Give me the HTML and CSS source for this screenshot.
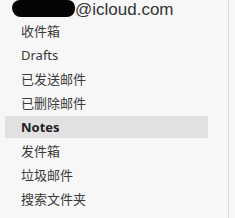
FILE: index.html
```html
<!DOCTYPE html>
<html>
<head>
<meta charset="utf-8">
<link rel="stylesheet" href="styles.css">
</head>
<body>
<div class="pane">
  <div class="account">
    <span class="redact"></span><span class="addr">@icloud.com</span>
  </div>
  <ul class="folders">
    <li class="folder">收件箱</li>
    <li class="folder">Drafts</li>
    <li class="folder">已发送邮件</li>
    <li class="folder">已删除邮件</li>
    <li class="folder selected">Notes</li>
    <li class="folder">发件箱</li>
    <li class="folder">垃圾邮件</li>
    <li class="folder">搜索文件夹</li>
  </ul>
</div>
</body>
</html>
```
FILE: styles.css
```css
html, body {
  margin: 0;
  padding: 0;
  background: #f7f7f7;
}
body {
  width: 235px;
  height: 218px;
  overflow: hidden;
}
.pane {
  width: 228px;
  height: 218px;
  border-right: 1px solid #d9d9d9;
  box-sizing: content-box;
  font-family: "Noto Sans", "Noto Sans CJK SC", sans-serif;
  color: #3a3a3a;
}
.account {
  display: flex;
  align-items: flex-start;
  height: 20px;
  padding-left: 12px;
}
.redact {
  display: inline-block;
  width: 63px;
  height: 17px;
  background: #050505;
  border-radius: 9px 8px 9px 10px;
}
.addr {
  font-family: "Liberation Sans", "Noto Sans", sans-serif;
  font-size: 17px;
  line-height: 20px;
  height: 20px;
  margin-left: 0;
  color: #333;
}
.folders {
  list-style: none;
  margin: 0;
  padding: 0;
  display: flex;
  flex-direction: column;
  gap: 2px;
}
.folder {
  height: 22px;
  line-height: 22px;
  margin-left: 5px;
  width: 203px;
  padding-left: 16px;
  box-sizing: border-box;
  font-size: 13px;
}
.selected {
  background: #e1e1e1;
  font-weight: bold;
  color: #222;
}
```
